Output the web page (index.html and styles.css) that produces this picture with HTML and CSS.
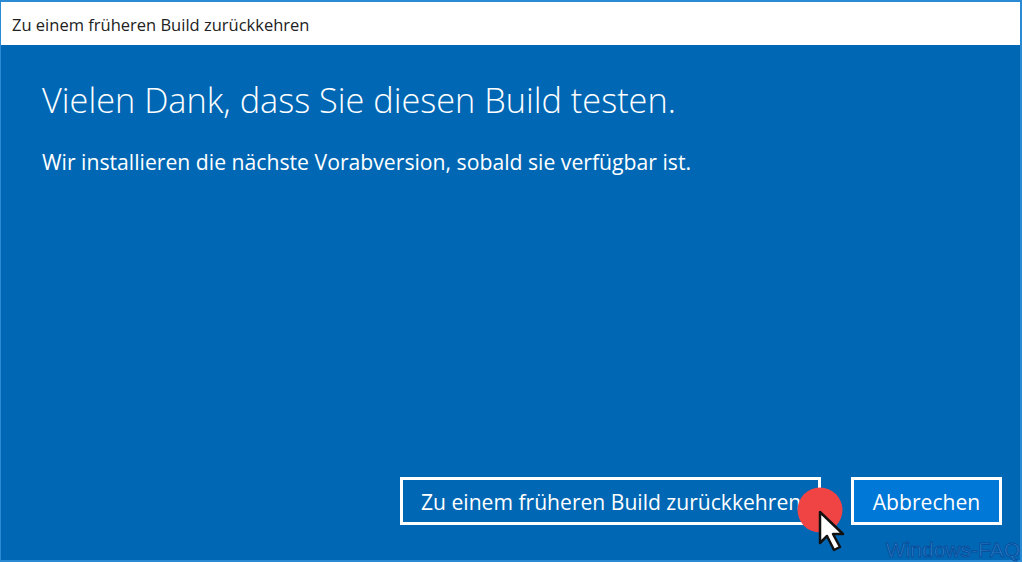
FILE: index.html
```html
<!DOCTYPE html>
<html lang="de">
<head>
    <meta charset="UTF-8">
    <title>Zu einem früheren Build zurückkehren</title>
    <link rel="stylesheet" href="styles.css">
</head>
<body>
    <div class="window">
        <div class="titlebar">Zu einem früheren Build zurückkehren</div>
        <div class="content">
            <h1>Vielen Dank, dass Sie diesen Build testen.</h1>
            <p>Wir installieren die nächste Vorabversion, sobald sie verfügbar ist.</p>
            <div class="actions">
                <button class="btn btn-outline">Zu einem früheren Build zurückkehren</button>
                <button class="btn btn-cancel">Abbrechen</button>
            </div>
        </div>
    </div>

    <!-- click marker with mouse pointer -->
    <svg class="pointer" width="60" height="70" viewBox="0 0 60 70">
        <circle cx="24" cy="24" r="22.5" fill="#f04444"/>
        <path d="M24 26 V57 L31 50 L38 64 L44 61 L37 48 L47 48 Z" fill="#fff" stroke="#111" stroke-width="2.5" stroke-linejoin="round"/>
    </svg>
    <div class="watermark">Windows-FAQ</div>
</body>
</html>
```

FILE: styles.css
```css
* {
    box-sizing: border-box;
}
html, body {
    margin: 0;
    padding: 0;
    height: 100%;
    overflow: hidden;
}
body {
    font-family: "Open Sans", "Noto Sans", sans-serif;
    position: relative;
    background-color: #0067b4;
}
.window {
    display: flex;
    flex-direction: column;
    height: 562px;
    border: 2px solid #2a8ad4;
    border-left-width: 1px;
}
.titlebar {
    height: 43px;
    padding: 12px 0 0 11px;
    background-color: white;
    color: #222;
    font-size: 16.5px;
    line-height: 22px;
}
.content {
    flex: 1;
    display: flex;
    flex-direction: column;
    padding: 32px 18px 35px 41px;
    background-color: #0067b4;
    color: white;
}
h1 {
    margin: 0;
    font-size: 34.3px;
    font-weight: 300;
    line-height: 46px;
}
p {
    margin: 24px 0 0;
    font-size: 21.2px;
    line-height: 30px;
}
.actions {
    margin-top: auto;
    display: flex;
    justify-content: flex-end;
    gap: 30px;
}
.btn {
    height: 48px;
    border: 3px solid white;
    color: white;
    font-family: inherit;
    font-size: 21.1px;
    padding: 0;
}
.btn-outline {
    width: 421px;
    padding-left: 18px;
    text-align: left;
    background-color: #0067b4;
}
.btn-cancel {
    width: 151px;
    background-color: #0078d7;
}
.pointer {
    position: absolute;
    left: 796px;
    top: 486px;
}
.watermark {
    position: absolute;
    right: 2px;
    bottom: 1px;
    font-family: "Liberation Sans", sans-serif;
    font-size: 21px;
    line-height: 22px;
    color: #2a86d0;
    -webkit-text-stroke: 1px #0a4f9c;
}
```
